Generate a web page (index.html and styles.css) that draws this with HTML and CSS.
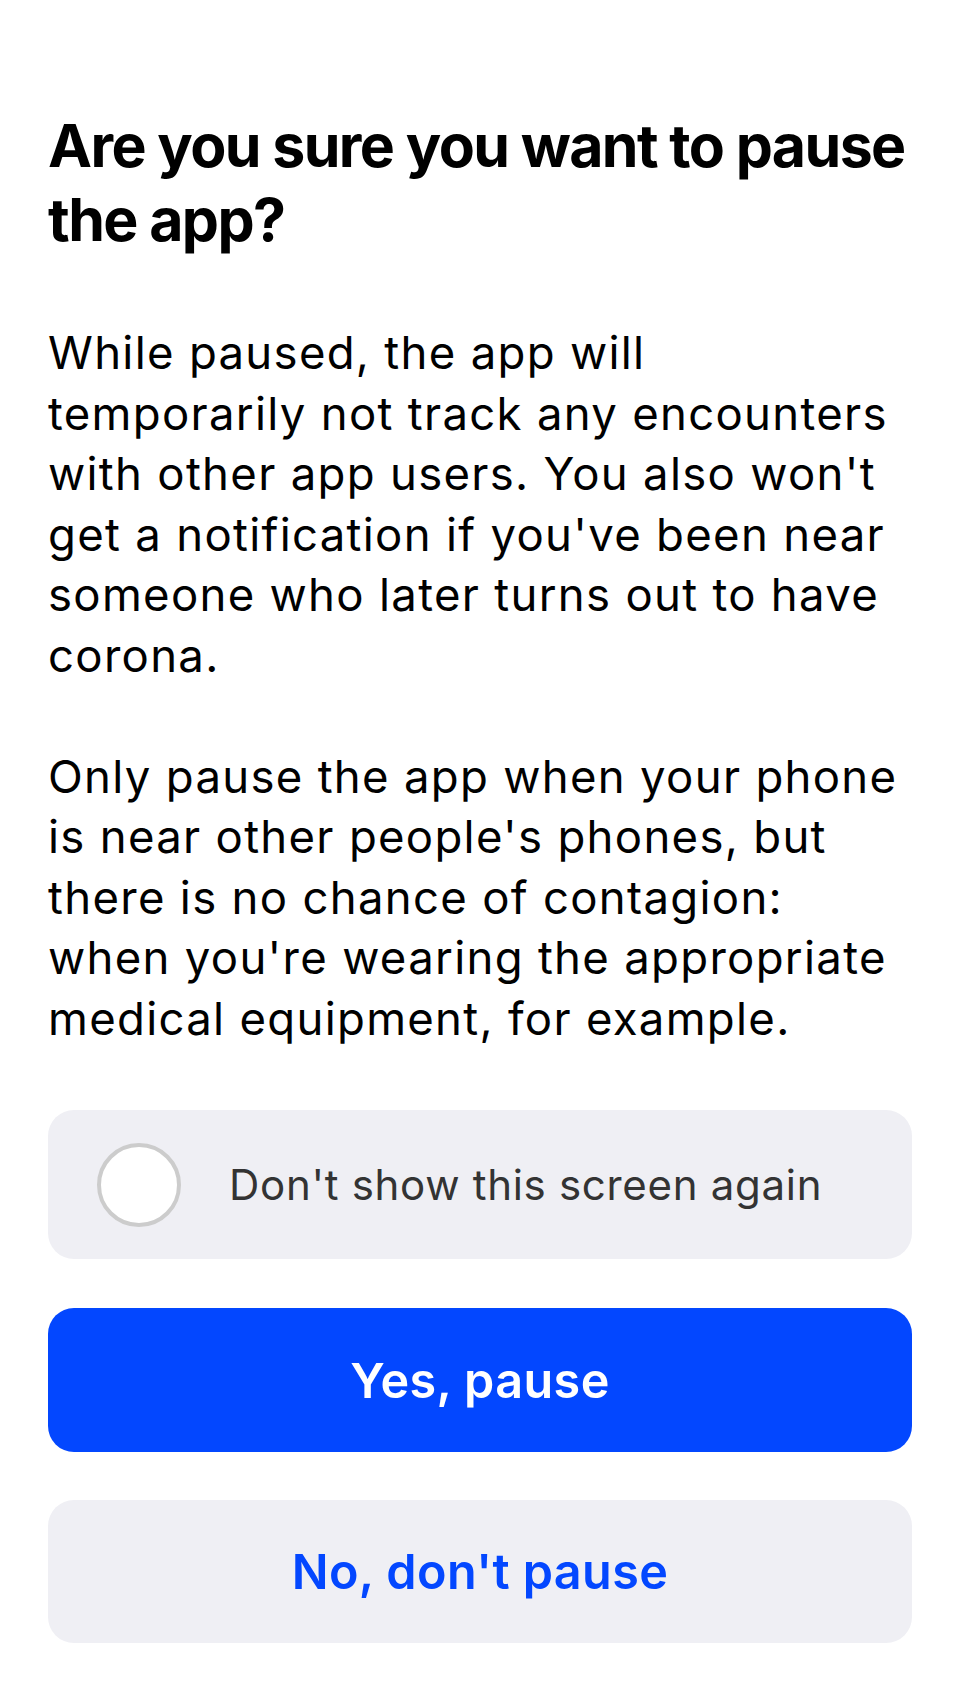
FILE: index.html
```html
<!DOCTYPE html>
<html lang="en">
<head>
<meta charset="utf-8">
<title>Pause the app</title>
<link rel="stylesheet" href="styles.css">
</head>
<body>
<main class="page">
  <h1 class="title">Are you sure you want to pause<br>the app?</h1>
  <p class="text">While paused, the app will<br>temporarily not track any encounters<br>with other app users. You also won't<br>get a notification if you've been near<br>someone who later turns out to have<br>corona.</p>
  <p class="text text-second">Only pause the app when your phone<br>is near other people's phones, but<br>there is no chance of contagion:<br>when you're wearing the appropriate<br>medical equipment, for example.</p>
  <label class="option">
    <span class="radio"></span>
    <span class="option-label">Don't show this screen again</span>
  </label>
  <button class="btn btn-primary">Yes, pause</button>
  <button class="btn btn-secondary">No, don't pause</button>
</main>
</body>
</html>
```
FILE: styles.css
```css
html, body {
  margin: 0;
  padding: 0;
  background: #ffffff;
}

body {
  font-family: Inter, "Noto Sans", "Liberation Sans", sans-serif;
  color: #000000;
}

.page {
  display: flex;
  flex-direction: column;
  padding: 109px 48px 0 48px;
}

.title {
  margin: 0;
  font-size: 59px;
  line-height: 74px;
  font-weight: 700;
  letter-spacing: -1.6px;
  white-space: nowrap;
}

.text {
  margin: 66px 0 0 0;
  font-size: 45.5px;
  line-height: 60.5px;
  font-weight: 400;
  letter-spacing: 1.3px;
  white-space: nowrap;
}

.text-second {
  margin-top: 60.5px;
}

.option {
  margin-top: 61px;
  height: 149px;
  box-sizing: border-box;
  background: #efeff4;
  border-radius: 26px;
  display: flex;
  align-items: center;
  padding-left: 49px;
  gap: 48px;
}

.radio {
  width: 84px;
  height: 84px;
  box-sizing: border-box;
  border-radius: 50%;
  border: 4px solid #cccccc;
  background: #ffffff;
  flex: none;
}

.option-label {
  font-size: 42px;
  color: #333333;
  letter-spacing: 0.7px;
}

.btn {
  display: block;
  width: 100%;
  border: none;
  border-radius: 26px;
  font-family: inherit;
  font-size: 48.5px;
  font-weight: 600;
  letter-spacing: 0.4px;
  padding: 0;
}

.btn-primary {
  margin-top: 49px;
  height: 144px;
  background: #0347ff;
  color: #ffffff;
}

.btn-secondary {
  margin-top: 48px;
  height: 143px;
  background: #efeff4;
  color: #0347ff;
}
```
